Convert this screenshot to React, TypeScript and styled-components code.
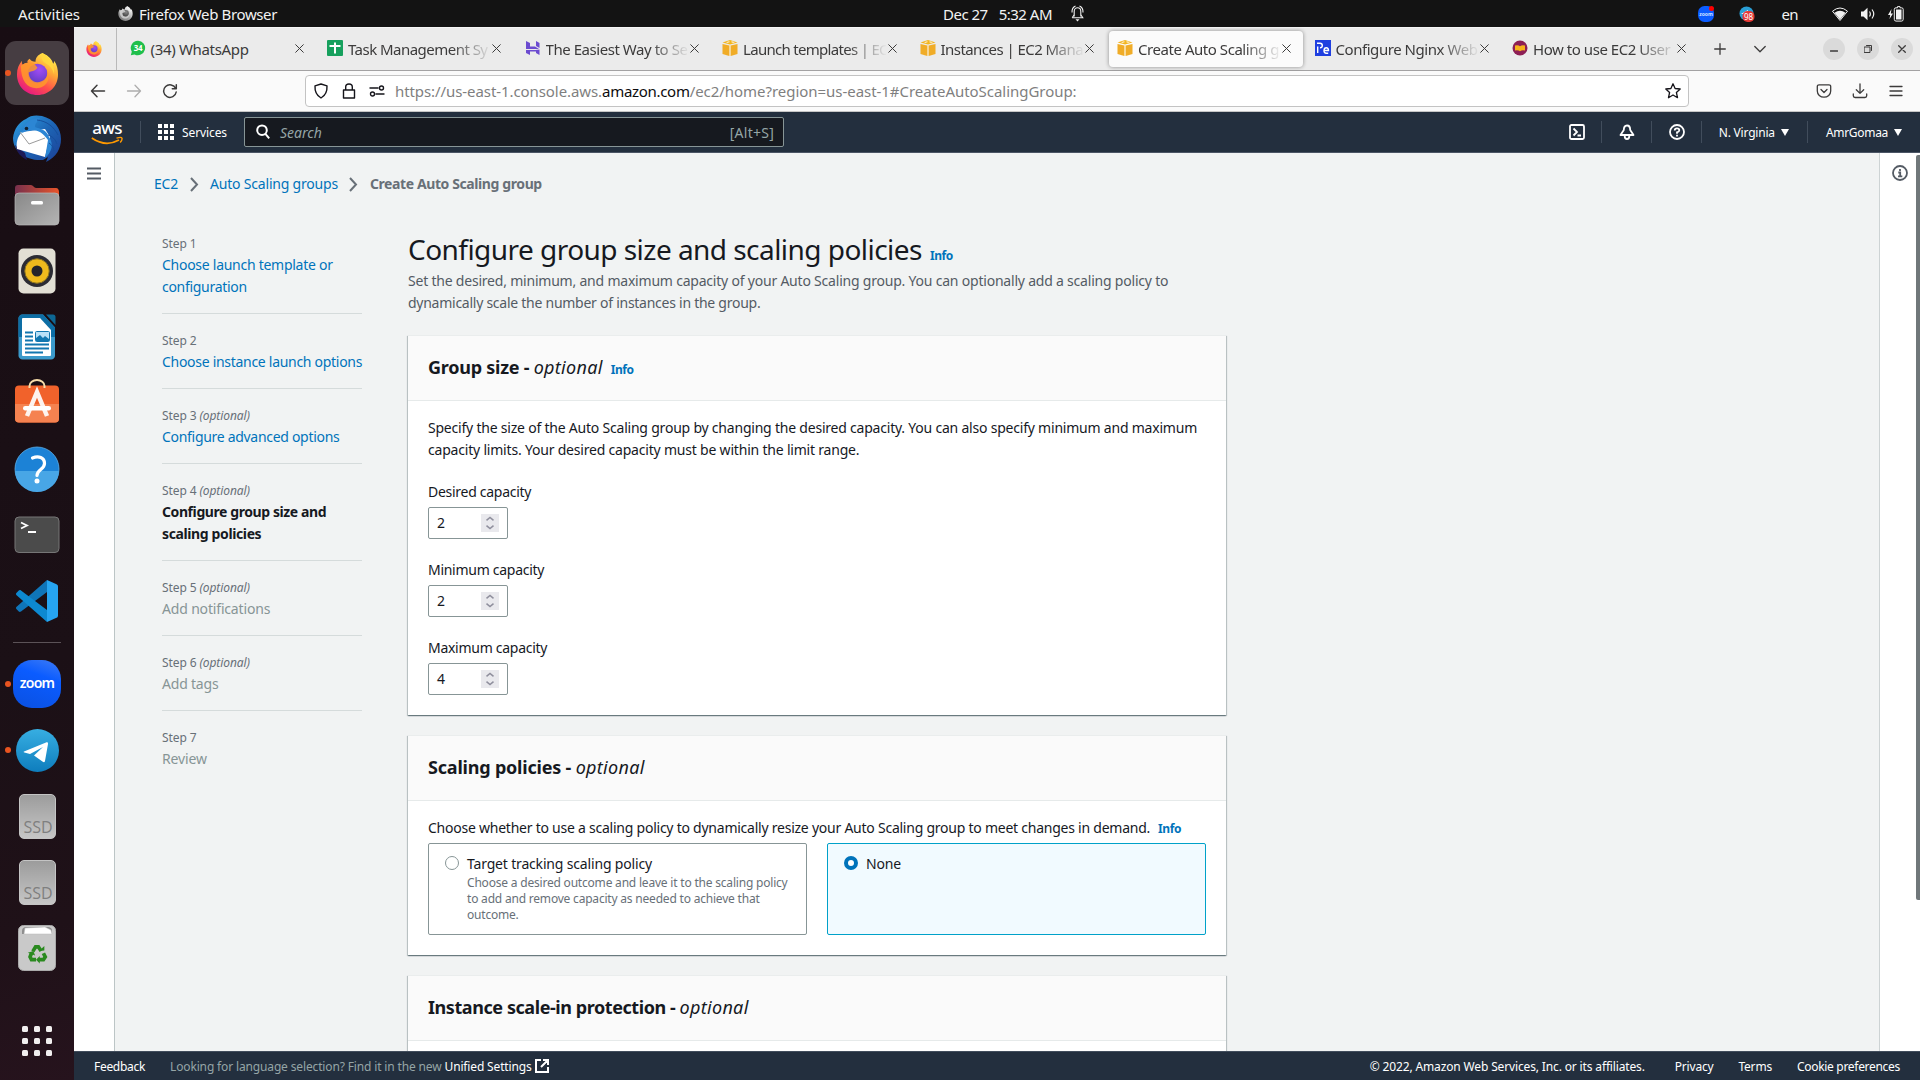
import React from 'react';
import styled, { createGlobalStyle, css } from 'styled-components';

const Global = createGlobalStyle`
  *, *::before, *::after { box-sizing: border-box; }
  html, body { margin: 0; padding: 0; background: #131313; overflow: hidden; }
  body { font-family: "Noto Sans", "Open Sans", sans-serif; font-size: 14px; line-height: 22px; color: #16191f; }
  svg { display: block; flex: none; }
`;

const Txt = styled.span<{ $ls?: number }>`
  white-space: nowrap;
  letter-spacing: ${p => p.$ls ?? 0}px;
`;

/* ---------- desktop shell ---------- */
const Screen = styled.div`
  width: 1920px;
  height: 1080px;
  display: flex;
  flex-direction: column;
  overflow: hidden;
`;
const TopBar = styled.header`
  height: 27px;
  flex: none;
  display: grid;
  grid-template-columns: 942px auto 1fr;
  align-items: center;
  background: #131313;
  color: #f2f2f2;
  font-size: 15px;
  line-height: 26px;
`;
const BarLeft = styled.div`
  display: flex;
  align-items: center;
  padding-left: 18px;
`;
const AppMenu = styled.div`
  display: flex;
  align-items: center;
  gap: 6px;
  margin-left: 38px;
`;
const Clock = styled.div`
  display: flex;
  align-items: center;
  width: 141px;
  padding-left: 1px;
`;
const Time = styled(Txt)` margin: 0 19px 0 11px; `;
const BarRight = styled.div`
  display: flex;
  align-items: center;
  justify-content: flex-end;
  padding-right: 16px;
`;
const Lang = styled(Txt)` margin: 0 34px 0 26px; `;
const Status = styled.div` display: flex; gap: 12px; align-items: center; `;
const TrayGap = styled.div` width: 25px; `;

const Desktop = styled.div` flex: 1; display: flex; min-height: 0; `;
const Dock = styled.nav`
  width: 74px;
  flex: none;
  padding-top: 13px;
  display: flex;
  flex-direction: column;
  background: linear-gradient(165deg, #180d13 0%, #1b1016 60%, #1f1118 85%, #26131d 100%);
`;
const Slot = styled.div<{ $running?: boolean; $active?: boolean }>`
  height: 66px;
  flex: none;
  display: flex;
  align-items: center;
  &::before {
    content: "";
    width: 6px;
    height: 6px;
    margin-left: 5px;
    border-radius: 50%;
    background: ${p => (p.$running ? '#e95420' : 'transparent')};
    z-index: 1;
  }
  & > div {
    width: 64px;
    height: 64px;
    margin-left: -6px;
    border-radius: 11px;
    display: flex;
    align-items: center;
    justify-content: center;
    background: ${p => (p.$active ? '#463d42' : 'transparent')};
  }
`;
const DockRule = styled.div` width: 48px; height: 1px; margin: 8px 13px; background: #5b5257; flex: none; `;
const AppsSlot = styled.div` margin-top: auto; padding: 0 22px 24px; `;

const Browser = styled.main` flex: 1; display: flex; flex-direction: column; min-width: 0; `;

/* ---------- browser chrome ---------- */
const TabStrip = styled.div`
  height: 44px;
  flex: none;
  display: flex;
  background: #ebebeb;
  border-top: 1px solid #f5f5f5;
  border-bottom: 1px solid #a3a2a3;
  color: #3c3b3b;
  font-size: 15px;
`;
const Pinned = styled.div`
  width: 43px;
  display: flex;
  align-items: center;
  padding-left: 12px;
  border-right: 1px solid #b9b9b9;
  margin-right: 2.75px;
`;
const Tab = styled.div<{ $active?: boolean }>`
  width: 194px;
  margin: 3px 1.75px;
  padding: 0 12px 2px 8px;
  display: flex;
  align-items: center;
  border-radius: 4px;
  ${p => p.$active && css`background: #fbfbfb; box-shadow: 0 0 4px rgba(0, 0, 0, .4);`}
`;
const TabTitle = styled.div<{ $ls: number; $plain?: boolean }>`
  width: 143px;
  margin: 1px 2px 0 5px;
  white-space: nowrap;
  letter-spacing: ${p => p.$ls}px;
  ${p => !p.$plain && css`mask-image: linear-gradient(to right, #000 104px, transparent 144px);`}
`;
const TabTools = styled.div` display: flex; align-items: center; gap: 28px; padding-left: 14px; `;
const WindowButtons = styled.div` margin-left: auto; padding-right: 7px; display: flex; align-items: center; gap: 12px; `;
const WinButton = styled.div`
  width: 22px;
  height: 22px;
  border-radius: 50%;
  background: #dadada;
  display: flex;
  align-items: center;
  justify-content: center;
`;

const NavBar = styled.div`
  height: 41px;
  flex: none;
  display: flex;
  align-items: center;
  background: #fafafa;
  border-bottom: 1px solid #c6c6c6;
  color: #3c3b3b;
`;
const NavButtons = styled.div` width: 231px; display: flex; gap: 20px; padding-left: 16px; `;
const UrlField = styled.div`
  width: 1384px;
  height: 32px;
  display: flex;
  align-items: center;
  padding: 0 7px;
  background: #fff;
  border: 1px solid #c3c3c3;
  border-radius: 4px;
  font-size: 15px;
`;
const UrlIcons = styled.div` display: flex; align-items: center; gap: 12px; width: 82px; `;
const Url = styled.div` flex: 1; color: #7f7f7f; white-space: nowrap; `;
const Host = styled(Txt)` color: #0c0c0d; `;
const NavTools = styled.div` display: flex; gap: 20px; margin-left: auto; padding-right: 16px; `;

/* ---------- console header and footer ---------- */
const Console = styled.header`
  height: 41px;
  flex: none;
  display: flex;
  align-items: center;
  padding: 0 18px 0 17px;
  background: #232f3e;
  border-bottom: 1px solid #4b5565;
  color: #fff;
  font-size: 12px;
  & span, & em { padding-top: 2px; }
`;
const Divider = styled.i<{ $l: number; $r: number }>`
  width: 1px;
  height: 22px;
  background: #414d5c;
  margin: 0 ${p => p.$r}px 0 ${p => p.$l}px;
`;
const Services = styled.div` display: flex; align-items: center; gap: 8px; width: 86px; `;
const SearchField = styled.div`
  width: 540px;
  height: 30px;
  display: flex;
  align-items: center;
  padding: 0 9px 0 11px;
  background: #16191f;
  border: 1px solid #879596;
  border-radius: 2px;
  color: #95a5a6;
  font-size: 14px;
  & > em { margin-left: 10px; flex: 1; }
`;
const Utilities = styled.div` margin-left: auto; display: flex; align-items: center; `;
const Caret = styled.i`
  margin-left: 6px;
  border: 4.5px solid transparent;
  border-top: 7px solid #fff;
  border-bottom: 0;
`;
const Footer = styled.footer`
  height: 29px;
  flex: none;
  display: flex;
  align-items: center;
  padding: 0 20px;
  background: #232f3e;
  border-top: 1px solid #414d5c;
  color: #fff;
  font-size: 12px;
  & span { padding-top: 2px; }
`;
const FooterNote = styled.div`
  margin-left: 25px;
  color: #95a5a6;
  display: flex;
  align-items: center;
  gap: 2px;
  & b { color: #fff; font-weight: 400; }
`;
const FooterLinks = styled.div` margin-left: auto; display: flex; `;
const FooterLink = styled(Txt)<{ $gap: number }>` margin-left: ${p => p.$gap}px; `;

/* ---------- page ---------- */
const Page = styled.div` flex: 1; display: flex; min-height: 0; background: #f1f3f3; overflow: hidden; `;
const LeftRail = styled.aside`
  width: 41px;
  flex: none;
  padding: 14px 0 0 13px;
  background: #fff;
  border-right: 1px solid #bcc5c6;
`;
const RightRail = styled.aside`
  width: 41px;
  flex: none;
  margin-left: auto;
  padding-left: 12px;
  display: flex;
  justify-content: space-between;
  background: #fff;
  border-left: 1px solid #cdd3d4;
  & > svg { margin-top: 12px; }
`;
const Scrollbar = styled.div` width: 4px; height: 745px; margin-top: 2px; border-radius: 2px 0 0 2px; background: #70777a; `;
const Content = styled.div` flex: none; width: 1112px; padding-left: 39px; `;
const Crumbs = styled.div`
  height: 62px;
  display: flex;
  align-items: center;
  color: #0073bb;
  & > svg { margin: 0 11.5px; }
`;
const CrumbHere = styled(Txt)` color: #687078; font-weight: 700; `;
const Columns = styled.div` display: flex; gap: 45px; padding-left: 8px; `;
const Steps = styled.ol` list-style: none; margin: 0; padding: 18px 0 0; width: 200px; flex: none; `;
const Step = styled.li`
  padding: 0 0 15px;
  margin-bottom: 16px;
  border-bottom: 1px solid #d5dbdb;
  &:last-child { border: 0; }
`;
const StepNo = styled.div` height: 21px; font-size: 12px; color: #687078; `;
const StepName = styled.div<{ $kind: 'link' | 'now' | 'off' }>`
  display: flex;
  flex-direction: column;
  color: ${p => ({ link: '#0073bb', now: '#16191f', off: '#879596' })[p.$kind]};
  font-weight: ${p => (p.$kind === 'now' ? 700 : 400)};
`;
const Form = styled.section` width: 820px; flex: none; padding-top: 16px; `;
const Heading = styled.h1` margin: 0 0 3px 1px; height: 36px; font-size: 28px; line-height: 36px; font-weight: 400; display: flex; align-items: baseline; `;
const Info = styled(Txt)` color: #0073bb; font-size: 12px; line-height: 12px; font-weight: 700; margin-left: 8px; `;
const Intro = styled.p` margin: 0 0 21px 1px; color: #545b64; display: flex; flex-direction: column; `;
const Card = styled.div`
  margin: 0 1px 20px;
  background: #fff;
  border-top: 1px solid #eaeded;
  box-shadow: 0 1px 1px 0 rgba(0, 28, 36, .35), 1px 1px 1px 0 rgba(0, 28, 36, .18), -1px 1px 1px 0 rgba(0, 28, 36, .18);
`;
const CardHead = styled.h2`
  margin: 0;
  height: 65px;
  padding: 19px 20px 0;
  background: #fafafa;
  border-bottom: 1px solid #e6eaea;
  font-size: 18px;
  line-height: 24px;
`;
const Opt = styled.em<{ $ls?: number }>` font-weight: 400; letter-spacing: ${p => p.$ls ?? 0}px; `;
const CardBody = styled.div<{ $h: number }>` height: ${p => p.$h}px; padding: 16px 20px 0; `;
const Copy = styled.div` display: flex; flex-direction: column; margin-bottom: 20px; `;
const Field = styled.label` display: block; height: 78px; `;
const NumberBox = styled.div`
  width: 80px;
  height: 32px;
  margin-top: 4px;
  padding: 0 8px;
  display: flex;
  align-items: center;
  justify-content: space-between;
  border: 1px solid #879596;
  border-radius: 2px;
  color: #16191f;
`;
const Tiles = styled.div` display: flex; gap: 20px; margin-top: 4px; `;
const Tile = styled.div<{ $on?: boolean }>`
  width: 379px;
  height: 92px;
  padding: 9px 16px;
  display: flex;
  gap: 8px;
  border: 1px solid ${p => (p.$on ? '#00a1c9' : '#879596')};
  border-radius: 2px;
  background: ${p => (p.$on ? '#f1faff' : '#fff')};
`;
const Radio = styled.i<{ $on?: boolean }>`
  width: 14px;
  height: 14px;
  margin-top: 3px;
  flex: none;
  border-radius: 50%;
  background: #fff;
  border: ${p => (p.$on ? '4.5px solid #0073bb' : '1px solid #879596')};
`;
const Hint = styled.div` display: flex; flex-direction: column; font-size: 12px; line-height: 16px; color: #687078; `;

/* ---------- icons ---------- */
const Firefox = ({ size, mono }: { size: number; mono?: boolean }) => {
  const id = mono ? 'm' : `c${size}`;
  return (
    <svg width={size} height={size} viewBox="0 0 44 44">
      <defs>
        <linearGradient id={`fx${id}`} x1="0.85" y1="0.05" x2="0.25" y2="1">
          <stop offset="0" stopColor={mono ? '#f4f4f4' : '#fff44f'} />
          <stop offset=".35" stopColor={mono ? '#cfcfcf' : '#ffa436'} />
          <stop offset=".65" stopColor={mono ? '#a0a0a0' : '#ff4f4b'} />
          <stop offset="1" stopColor={mono ? '#777' : '#e31587'} />
        </linearGradient>
        <radialGradient id={`fp${id}`} cx=".6" cy=".3" r=".8">
          <stop offset="0" stopColor={mono ? '#888' : '#a24cf5'} />
          <stop offset="1" stopColor={mono ? '#333' : '#5a3bc0'} />
        </radialGradient>
      </defs>
      <path fill={`url(#fx${id})`} d="M27 1c7 3 10 7 11 11 1-1 1-2 1-3 3 4 4 9 4 14 0 12-9 21-21 21S1 35 1 23C1 17 3 13 6 9c0 2 0 3 1 4 1-1 3-2 5-2-1-1 0-3 2-4 1 2 3 3 6 3 0-4 2-7 7-9z" />
      <circle cx="22" cy="22" r="10" fill={`url(#fp${id})`} />
      <path fill={mono ? '#d0d0d0' : '#ff9a2a'} d="M5 14c4-3 7-3 9-3 4 0 6 2 8 5-3 4-6 3-9 5 0 7 6 12 13 9 5-2 7-6 6-11 4 9-1 18-11 18S5 29 5 14z" opacity=".85" />
      <path fill={mono ? '#eee' : '#ffd83d'} d="M27 1c8 4 13 13 12 22-1-5-4-9-8-11-5-3-6-7-4-11z" opacity=".9" />
    </svg>
  );
};
const Thunderbird = () => (
  <svg width="48" height="48" viewBox="0 0 48 48">
    <defs>
      <linearGradient id="tb" x1="0" y1="0" x2="1" y2="1"><stop offset="0" stopColor="#2fa3e6" /><stop offset=".5" stopColor="#1d65b5" /><stop offset="1" stopColor="#1c3f96" /></linearGradient>
    </defs>
    <path fill="url(#tb)" d="M13 4C17 0 24 0 29 1c12 3 19 12 19 23 0 10-5 18-15 23l2-5-5 3C12 46 0 36 0 23 1 14 6 7 13 4z" />
    <path fill="#1c1a58" d="M2 30c2 8 6 12 12 15L12 38z" />
    <path fill="#fff" d="M9 17l23-3 5 8-5 20L4 34C3 28 4 22 9 17z" />
    <path fill="none" stroke="#9a9a9a" d="M7 17l9 12 16-6" />
    <path fill="#2c86d4" d="M9 18C11 8 17 3 27 3c-2 3-5 5-5 9 5 2 11 2 14 10 5 7 3 15-4 21l3-18C28 15 20 12 9 18z" />
    <circle cx="13.500" cy="13.500" r="1.800" fill="#123" />
    <path fill="none" stroke="#164f9c" d="M24 5c10 1 17 7 21 15M35 20c4 1 8 5 9 9M36 28c3 2 5 5 5 8" />
  </svg>
);
const Files = () => (
  <svg width="46" height="42" viewBox="0 0 46 42">
    <defs>
      <linearGradient id="fa"><stop offset="0" stopColor="#77304d" /><stop offset="1" stopColor="#e8552b" /></linearGradient>
      <linearGradient id="fb" x2="1" y2="1"><stop offset="0" stopColor="#888" /><stop offset="1" stopColor="#b4b4b4" /></linearGradient>
    </defs>
    <path fill="url(#fa)" d="M4 1h13c2 0 3 3 5 3h20c2 0 3 2 3 4v12H1V4c0-2 1-3 3-3z" />
    <rect x="1" y="9" width="44" height="32" rx="4" fill="url(#fb)" stroke="#b9b9b9" strokeWidth=".7" />
    <rect x="17" y="17" width="12" height="3.500" rx="1.500" fill="#fff" />
  </svg>
);
const Rhythmbox = () => (
  <svg width="38" height="46" viewBox="0 0 38 46">
    <rect x=".5" y=".5" width="37" height="45" rx="5" fill="#e2dfd4" />
    <circle cx="19" cy="23" r="16" fill="#2b2b33" />
    <circle cx="19" cy="23" r="12.200" fill="#efba1d" stroke="#8c7420" />
    <circle cx="19" cy="23" r="5.500" fill="#25252b" />
  </svg>
);
const Writer = () => (
  <svg width="38" height="46" viewBox="0 0 38 46">
    <path fill="#3b9acb" d="M5 .5h20l12 13V41a4 4 0 0 1-4 4.500H5A4 4 0 0 1 .5 41V5A4 4 0 0 1 5 .5z" />
    <path fill="#0d6ea5" d="M5 .5h20l12 13V23H.5V5A4 4 0 0 1 5 .5z" />
    <path fill="#0d6794" d="M28 .5h7a2.500 2.500 0 0 1 2.500 2.500v8z" />
    <path fill="#fff" d="M5 4h17l11 12v25a1 1 0 0 1-1 1H5a1 1 0 0 1-1-1V5a1 1 0 0 1 1-1z" />
    <path stroke="#1277b0" strokeWidth="2" d="M7 18.500h8M7 22.500h8M7 26.500h8M7 30.500h24M7 34.500h24M7 38.500h18" />
    <rect x="17.500" y="17.500" width="14" height="10" rx="1" fill="#b9e0f7" stroke="#1277b0" />
    <path fill="#1277b0" d="M18 27v-3l4-3 3 3 2-2 4 3v2z" />
  </svg>
);
const Software = () => (
  <svg width="46" height="50" viewBox="0 0 46 50">
    <rect x="1" y="7.500" width="44" height="37" rx="4" fill="#f1622b" />
    <path fill="#f58250" d="M1 26h44v14.500a4 4 0 0 1-4 4H5a4 4 0 0 1-4-4z" />
    <path fill="none" stroke="#f7dca9" strokeWidth="2" d="M15.500 10V8a7.500 6 0 0 1 15 0v2" />
    <path fill="none" stroke="#fdf3ee" strokeWidth="4.500" d="M13 38l10-24 10 24" />
    <rect x="9" y="28" width="28" height="4.500" rx="2.200" fill="#fff" />
  </svg>
);
const Help = () => (
  <svg width="46" height="46" viewBox="0 0 46 46">
    <circle cx="23" cy="23" r="22" fill="#1c82d6" stroke="#5aaeea" strokeWidth=".8" />
    <path fill="#48a6e6" d="M1 25h44a22 21 0 0 1-44 0z" />
    <path fill="none" stroke="#fff" strokeWidth="3.200" strokeLinecap="round" d="M18.500 12c6-2.500 12-.5 12 5.500 0 6-7.500 6-7.500 12" />
    <circle cx="23" cy="35" r="2.500" fill="#fff" />
  </svg>
);
const Terminal = () => (
  <svg width="46" height="38" viewBox="0 0 46 38">
    <rect x="1" y="1" width="44" height="35.500" rx="4" fill="#4b4b4b" stroke="#767676" />
    <path fill="none" stroke="#fff" strokeWidth="1.800" d="M7 6.500l6 3-6 3M14 16h8" />
  </svg>
);
const VSCode = () => (
  <svg width="42" height="42" viewBox="0 0 42 42">
    <path fill="#0f75b9" d="M31 0v12L5 31.500c-1 .7-1.500.6-2.200 0L.6 29.300c-.8-.8-.8-1.700 0-2.500z" />
    <path fill="#0d89d1" d="M.6 12.800c-.8.8-.8 1.700 0 2.500L31 42V30L5 10.600c-1-.7-1.500-.6-2.200 0z" />
    <path fill="#26a5f1" d="M31 0l9.500 4.200c1 .5 1.500 1.200 1.500 2.300v29c0 1.100-.5 1.800-1.500 2.300L31 42z" />
  </svg>
);
const ZoomTile = styled.div`
  width: 48px;
  height: 48px;
  border-radius: 19px;
  background: linear-gradient(200deg, #3f7cf5 0%, #0b5cff 35%, #0a50e0 100%);
  color: #fff;
  font: 600 14px/45px "Noto Sans", sans-serif;
  letter-spacing: -.7px;
  text-align: center;
`;
const Telegram = () => (
  <svg width="43" height="43" viewBox="0 0 43 43">
    <defs><linearGradient id="tg" x2="0" y2="1"><stop offset="0" stopColor="#37aee2" /><stop offset="1" stopColor="#0e7dbd" /></linearGradient></defs>
    <circle cx="21.500" cy="21.500" r="21.500" fill="url(#tg)" />
    <path fill="#fff" d="M8 22.500L30 13.500c1.500-.5 2.200.2 2 1.500l-3 17c-.3 1.300-1.200 1.500-2.200.8L18 26.500l9-8.500-13 7-5.600-1.500c-1-.3-.9-.7-.4-1z" />
  </svg>
);
const SsdTile = styled.div`
  width: 37px;
  height: 45px;
  border-radius: 5px;
  background: linear-gradient(#9c9c9c, #c6c6c6);
  border: 1px solid #c4c4c4;
  color: #7f7f7f;
  font: 400 16px/20px "Open Sans", sans-serif;
  padding: 22px 0 0 4px;
`;
const Trash = () => (
  <svg width="38" height="46" viewBox="0 0 38 46">
    <rect x=".5" y=".5" width="37" height="45" rx="5" fill="#c9c9c9" stroke="#aaa" />
    <path fill="#8d8d8d" d="M4 9V6c0-3 2-4 4-4h22c2 0 4 1 4 4v3z" />
    <path fill="#fff" stroke="#bbb" strokeWidth=".5" d="M6 9l1-6 20-1 6 3 1 4z" />
    <g transform="translate(1.500 2.500) scale(.92)">
      <g stroke="#2a8a1f" strokeWidth="4" fill="none">
        <path d="M14.500 26l3-5h3l3 4.500" />
        <path d="M26 28l2 4-2 3h-5" />
        <path d="M18 35h-5l-1.500-3 1.500-4" />
      </g>
      <path fill="#2a8a1f" d="M21 25.500l6-.5v-5zM22 31v8l-4-4zM9 27.500l6-2 2 5z" />
    </g>
  </svg>
);
const AppsGrid = () => (
  <svg width="30" height="30" viewBox="0 0 30 30" fill="#f1efef">
    {[0, 12, 24].map(y => [0, 12, 24].map(x => <rect key={`${x}-${y}`} x={x} y={y} width="6" height="6" rx="1.500" />))}
  </svg>
);
const Line = ({ d, w = 16, h = 16, sw = 1.3, op = 1, c = 'currentColor' }: { d: string; w?: number; h?: number; sw?: number; op?: number; c?: string }) => (
  <svg width={w} height={h} viewBox={`0 0 ${w} ${h}`} fill="none" stroke={c} strokeWidth={sw} strokeLinecap="round" strokeLinejoin="round" opacity={op}><path d={d} /></svg>
);
const Cross = () => <Line w={9} h={9} sw={1} d="M.7.7l7.600 7.600M8.300.7L.7 8.300" />;
const Cube = () => (
  <svg width="16" height="16" viewBox="0 0 16 16">
    <path fill="#f0ac27" d="M.5 4l6.800 1.600V16L.5 14zM15.500 4L8.700 5.600V16l6.800-2z" />
    <path fill="#f3b51f" d="M8 0l7.500 2.400L8 4.400.5 2.400z" />
    <path fill="#fff" d="M4 2.300l3-1 1 .6-2.500 1zM10 1.300l3 1-2 .6-2-.8z" opacity=".75" />
    <path fill="#f8d68d" d="M7.300 5.600h1.400V16H7.300z" />
  </svg>
);
const WhatsApp = () => (
  <svg width="16" height="16" viewBox="0 0 16 16">
    <path fill="#1fbf4b" d="M8 .8A7.200 7.200 0 1 1 4.600 14.400L.8 15.300l1-3.600A7.200 7.200 0 0 1 8 .8z" />
    <text x="8" y="11" textAnchor="middle" fontSize="8" fontWeight="700" fill="#fff" fontFamily="Noto Sans" letterSpacing="-.4">34</text>
  </svg>
);
const Sheets = () => (
  <svg width="16" height="16" viewBox="0 0 16 16"><rect width="16" height="16" rx="1" fill="#16a05d" /><path stroke="#fff" strokeWidth="2" d="M2.500 6h11M8 2.500v11" /></svg>
);
const Hostinger = () => (
  <svg width="16" height="16" viewBox="0 0 16 16" fill="#6b4bd0">
    <path d="M1 1l4 2v3.500h5L14 9H1zM11 1l3.500 2v5L11 6zM1 10h9.500L14.500 9.500V15L11 13v-1.500H5V15l-4-2z" />
  </svg>
);
const Pe = () => (
  <svg width="16" height="16" viewBox="0 0 16 16"><rect width="16" height="16" fill="#1f3fe0" />
    <path stroke="#fff" strokeWidth="1.400" fill="none" d="M2.700 6.500v6.500M2 3.200h3q2.300 0 2.300 2.200T5 7.800M9 10.500h4.500q0-2.800-2.200-2.800T9 10.500t2.400 2.700h1.800" /></svg>
);
const Book = () => (
  <svg width="16" height="16" viewBox="0 0 16 16"><circle cx="8" cy="8" r="7.500" fill="#8d1f54" /><path fill="#f7b21a" d="M3 5.500q3-1 5 .8 2-1.800 5-.8v5q-3-.8-5 .8-2-1.600-5-.8z" /></svg>
);
const ZoomTray = () => (
  <svg width="16" height="16" viewBox="0 0 16 16"><rect width="16" height="16" rx="6.500" fill="#0b5cff" />
    <text x="8" y="9.500" textAnchor="middle" fontSize="5" fontWeight="700" fill="#cfe0ff" fontFamily="Noto Sans">zoom</text>
    <circle cx="13.500" cy="2.500" r="2.500" fill="#f00" /></svg>
);
const TelegramTray = () => (
  <svg width="16" height="16" viewBox="0 0 16 16"><circle cx="7.500" cy="7.500" r="7" fill="#2a9fd6" /><path fill="#fff" d="M2 8l7-4v4z" />
    <rect x="3.500" y="5" width="12" height="11" rx="5" fill="#e53935" />
    <text x="9.500" y="13.500" textAnchor="middle" fontSize="8" fill="#fff" fontFamily="Noto Sans">98</text></svg>
);
const Wifi = () => <svg width="16" height="14" viewBox="0 0 16 14"><path d="M.5 4.200Q8-2.200 15.500 4.200L8 13.500z" fill="none" stroke="#f2f2f2" strokeLinejoin="round" /><path fill="#f2f2f2" d="M2.500 5.800Q8 1.500 13.500 5.800L8 12.500z" /></svg>;
const Volume = () => <svg width="16" height="14" viewBox="0 0 16 14"><path fill="#f2f2f2" d="M1 4.500h2.500L7.500.8v12.400L3.500 9.500H1z" /><path fill="none" stroke="#f2f2f2" strokeWidth="1.200" d="M9.500 4.500q1.700 2.500 0 5M12 2.500q3.500 4.500 0 9" /></svg>;
const Battery = () => <svg width="16" height="16" viewBox="0 0 16 16"><path fill="#f2f2f2" d="M3.500 3L0 9h2.200L1.500 13 5 7.500H2.800zM8 3.500h5.500v10H8z" /><path fill="none" stroke="#f2f2f2" d="M9.500 1.800V.6H12v1.200h1.500q1.700 0 1.700 1.500v10q0 1.800-1.700 1.800H8q-1.700 0-1.700-1.800v-10q0-1.500 1.700-1.500z" /></svg>;
const TopBell = () => (
  <svg width="13" height="17" viewBox="0 0 13 17" fill="none" stroke="#f2f2f2" strokeWidth="1.100">
    <path d="M3.200 11.500V6.500a3.300 3.700 0 0 1 6.600 0v5M1.200 12.800h10.600L10 10M3 10l-1.800 2.800M1 7.500Q.8 2.500 4.500 1M12 7.500Q12.200 2.500 8.500 1" /><path fill="#f2f2f2" stroke="none" d="M4.500 14.300h4L6.500 16.500z" />
  </svg>
);
const AwsLogo = styled.div`
  width: 32px;
  height: 24px;
  display: flex;
  flex-direction: column;
  align-items: center;
  font: 500 17px/15px "Noto Sans", sans-serif;
  letter-spacing: -.7px;
  & > svg { margin-top: 1px; }
`;
const Smile = () => (
  <svg width="32" height="9" viewBox="0 0 32 9" fill="none" stroke="#ff9900" strokeWidth="1.700">
    <path d="M.8 2Q14.500 11.500 28 4" /><path strokeWidth="1.400" d="M25.500 2.200q5-1.500 5.500 0t-1.800 4.300" />
  </svg>
);
const Grid9 = () => (
  <svg width="16" height="16" viewBox="0 0 16 16" fill="#fff">{[0, 6, 12].map(y => [0, 6, 12].map(x => <rect key={`${x}${y}`} x={x} y={y} width="4" height="4" />))}</svg>
);
const Chevron = () => <svg width="9" height="15" viewBox="0 0 9 15" fill="none" stroke="#687078" strokeWidth="2"><path d="M1 1l6 6.500L1 14" /></svg>;
const Spinner = () => (
  <svg width="18" height="18" viewBox="0 0 18 18"><rect width="18" height="18" fill="#e9e9ed" /><path fill="none" stroke="#8f8f9d" strokeWidth="1.500" d="M5.500 6.400l3.500-3 3.500 3M5.500 11.600l3.500 3 3.500-3" /></svg>
);

/* ---------- data ---------- */
const tabs = [
  { icon: <WhatsApp />, title: '(34) WhatsApp', ls: -0.33, plain: true },
  { icon: <Sheets />, title: 'Task Management Sy', ls: -0.53 },
  { icon: <Hostinger />, title: 'The Easiest Way to Se', ls: -0.45 },
  { icon: <Cube />, title: 'Launch templates | EC', ls: -0.7 },
  { icon: <Cube />, title: 'Instances | EC2 Mana', ls: -0.55 },
  { icon: <Cube />, title: 'Create Auto Scaling g', ls: -0.45, active: true },
  { icon: <Pe />, title: 'Configure Nginx Web', ls: -0.45 },
  { icon: <Book />, title: 'How to use EC2 User', ls: -0.45 },
];
type StepItem = { lines: [string, number][]; kind: 'link' | 'now' | 'off'; optional?: boolean };
const steps: StepItem[] = [
  { lines: [['Choose launch template or', -0.27], ['configuration', -0.3]], kind: 'link' },
  { lines: [['Choose instance launch options', -0.29]], kind: 'link' },
  { lines: [['Configure advanced options', -0.3]], kind: 'link', optional: true },
  { lines: [['Configure group size and', -0.41], ['scaling policies', -0.38]], kind: 'now', optional: true },
  { lines: [['Add notifications', -0.17]], kind: 'off', optional: true },
  { lines: [['Add tags', -0.2]], kind: 'off', optional: true },
  { lines: [['Review', -0.15]], kind: 'off' },
];
const fields = [['Desired capacity', '2'], ['Minimum capacity', '2'], ['Maximum capacity', '4']];

export default function App() {
  return (
    <Screen>
      <Global />
      <TopBar>
        <BarLeft>
          <Txt $ls={-0.05}>Activities</Txt>
          <AppMenu><Firefox size={15} mono /><Txt $ls={-0.37}>Firefox Web Browser</Txt></AppMenu>
        </BarLeft>
        <Clock><Txt $ls={-0.5}>Dec 27</Txt><Time $ls={-0.5}>5:32 AM</Time><TopBell /></Clock>
        <BarRight>
          <ZoomTray /><TrayGap /><TelegramTray />
          <Lang $ls={-0.6}>en</Lang>
          <Status><Wifi /><Volume /><Battery /></Status>
        </BarRight>
      </TopBar>
      <Desktop>
        <Dock>
          <Slot $running $active><div><Firefox size={43} /></div></Slot>
          <Slot><div><Thunderbird /></div></Slot>
          <Slot><div><Files /></div></Slot>
          <Slot><div><Rhythmbox /></div></Slot>
          <Slot><div><Writer /></div></Slot>
          <Slot><div><Software /></div></Slot>
          <Slot><div><Help /></div></Slot>
          <Slot><div><Terminal /></div></Slot>
          <Slot><div><VSCode /></div></Slot>
          <DockRule />
          <Slot $running><div><ZoomTile>zoom</ZoomTile></div></Slot>
          <Slot $running><div><Telegram /></div></Slot>
          <Slot><div><SsdTile>SSD</SsdTile></div></Slot>
          <Slot><div><SsdTile>SSD</SsdTile></div></Slot>
          <Slot><div><Trash /></div></Slot>
          <AppsSlot><AppsGrid /></AppsSlot>
        </Dock>
        <Browser>
          <TabStrip>
            <Pinned><Firefox size={16} /></Pinned>
            {tabs.map(t => (
              <Tab key={t.title} $active={t.active}>
                {t.icon}<TabTitle $ls={t.ls} $plain={t.plain}>{t.title}</TabTitle><Cross />
              </Tab>
            ))}
            <TabTools><Line w={12} h={12} d="M6 .7v10.600M.7 6h10.600" /><Line w={12} h={12} d="M.8 3.500L6 8.700l5.200-5.200" /></TabTools>
            <WindowButtons>
              <WinButton><Line w={8} h={8} d="M.5 6h7" /></WinButton>
              <WinButton><Line w={8} h={8} sw={1} d="M.5 2h5.500v5.500H.5zM2.500.5h5v5" /></WinButton>
              <WinButton><Line w={8} h={8} d="M.7.7l6.600 6.600M7.300.7L.7 7.300" /></WinButton>
            </WindowButtons>
          </TabStrip>
          <NavBar>
            <NavButtons>
              <Line sw={1.5} d="M1.500 8h13M7 2.300L1.500 8 7 13.700" />
              <Line op={0.4} d="M1.500 8h13M9 2.300L14.500 8 9 13.700" />
              <Line sw={1.5} d="M13.700 5.500A6.300 6.300 0 1 0 14.200 9M14.300 1.800v4h-4" />
            </NavButtons>
            <UrlField>
              <UrlIcons>
                <Line c="#15141a" sw={1.4} d="M8 1l6 1.800c.3 5.500-1.500 9.700-6 12.200C3.500 12.500 1.700 8.300 2 2.800z" />
                <Line c="#15141a" sw={1.4} d="M2.500 7h11v8h-11zM4.700 7V4a3.300 3 0 0 1 6.600 0v3" />
                <Line c="#15141a" sw={1.4} d="M1 5h8M12.500 3a2 2 0 1 1 0 4 2 2 0 0 1 0-4M15 11H7M3.500 9a2 2 0 1 1 0 4 2 2 0 0 1 0-4" />
              </UrlIcons>
              <Url><Txt $ls={-0.08}>https://us-east-1.console.aws.</Txt><Host $ls={-0.3}>amazon.com</Host><Txt $ls={-0.04}>/ec2/home?region=us-east-1#CreateAutoScalingGroup:</Txt></Url>
              <Line c="#15141a" d="M8 .8l2.100 4.700 5.100.5-3.800 3.500 1.100 5.200L8 12l-4.500 2.700 1.100-5.200L.8 6l5.100-.5z" />
            </UrlField>
            <NavTools>
              <Line d="M3 1.800h10a1.700 1.700 0 0 1 1.700 1.700V8c0 3.500-3 6.200-6.700 6.200S1.300 11.500 1.300 8V3.500A1.700 1.700 0 0 1 3 1.800zM5 6.500l3 3 3-3" />
              <Line d="M8 .8v9.500M4.300 6.800L8 10.400l3.700-3.600M1.300 11v1.700q0 1.800 1.800 1.800h9.800q1.800 0 1.800-1.800V11" />
              <Line d="M2 3.500h12M2 8h12M2 12.500h12" />
            </NavTools>
          </NavBar>
          <Console>
            <AwsLogo>aws<Smile /></AwsLogo>
            <Divider $l={17} $r={17} />
            <Services><Grid9 /><Txt $ls={-0.1}>Services</Txt></Services>
            <SearchField>
              <svg width="14" height="16" viewBox="0 0 14 16" fill="none" stroke="#fff" strokeWidth="2"><circle cx="6" cy="6.200" r="4.800" /><path d="M9.200 9.700l4 4.600" /></svg>
              <em>Search</em><Txt $ls={0.25}>[Alt+S]</Txt>
            </SearchField>
            <Utilities>
              <svg width="16" height="16" viewBox="0 0 16 16" fill="none" stroke="#fff" strokeWidth="1.800"><rect x="1" y="1" width="14" height="14" rx="1.500" /><path d="M4.500 4.500L8 8l-3.500 3.500M8.500 11.500H12" /></svg>
              <Divider $l={16} $r={17} />
              <svg width="16" height="16" viewBox="0 0 16 16" fill="none" stroke="#fff" strokeWidth="1.800" strokeLinejoin="round"><path d="M8 1.500q3.200 0 3.200 4.500l3.300 5h-13L4.800 6Q4.800 1.500 8 1.500zM5.700 12q0 3 2.300 3t2.300-3" /></svg>
              <Divider $l={16} $r={17} />
              <svg width="16" height="16" viewBox="0 0 16 16" fill="none" stroke="#fff" strokeWidth="1.800"><circle cx="8" cy="8" r="7" /><path d="M5.700 6.400Q5.700 4.300 8 4.300t2.300 1.900Q10.300 7.700 8 8.300V9.700M8 10.700v1.800" /></svg>
              <Divider $l={16} $r={17} />
              <Txt $ls={-0.2}>N. Virginia</Txt><Caret />
              <Divider $l={18} $r={18} />
              <Txt $ls={-0.3}>AmrGomaa</Txt><Caret />
            </Utilities>
          </Console>
          <Page>
            <LeftRail>
              <svg width="14" height="13" viewBox="0 0 14 13" fill="#545b64"><path d="M0 .5h14v2H0zM0 5.500h14v2H0zM0 10.500h14v2H0z" /></svg>
            </LeftRail>
            <Content>
              <Crumbs>
                <Txt $ls={-0.2}>EC2</Txt><Chevron />
                <Txt $ls={-0.2}>Auto Scaling groups</Txt><Chevron />
                <CrumbHere $ls={-0.4}>Create Auto Scaling group</CrumbHere>
              </Crumbs>
              <Columns>
                <Steps>
                  {steps.map((s, i) => (
                    <Step key={i}>
                      <StepNo><Txt $ls={-0.1}>Step {i + 1}{s.optional && <em> (optional)</em>}</Txt></StepNo>
                      <StepName $kind={s.kind}>{s.lines.map(([t, ls]) => <Txt key={t} $ls={ls}>{t}</Txt>)}</StepName>
                    </Step>
                  ))}
                </Steps>
                <Form>
                  <Heading><Txt $ls={-0.54}>Configure group size and scaling policies</Txt><Info $ls={-0.4}>Info</Info></Heading>
                  <Intro>
                    <Txt $ls={-0.21}>Set the desired, minimum, and maximum capacity of your Auto Scaling group. You can optionally add a scaling policy to</Txt>
                    <Txt $ls={-0.26}>dynamically scale the number of instances in the group.</Txt>
                  </Intro>
                  <Card>
                    <CardHead><Txt $ls={-0.25}>Group size - </Txt><Opt $ls={0.3}>optional</Opt><Info $ls={-0.4}>Info</Info></CardHead>
                    <CardBody $h={314}>
                      <Copy>
                        <Txt $ls={-0.214}>Specify the size of the Auto Scaling group by changing the desired capacity. You can also specify minimum and maximum</Txt>
                        <Txt $ls={-0.2}>capacity limits. Your desired capacity must be within the limit range.</Txt>
                      </Copy>
                      {fields.map(([label, value]) => (
                        <Field key={label}><Txt $ls={-0.28}>{label}</Txt><NumberBox>{value}<Spinner /></NumberBox></Field>
                      ))}
                    </CardBody>
                  </Card>
                  <Card>
                    <CardHead><Txt $ls={-0.2}>Scaling policies - </Txt><Opt $ls={0.3}>optional</Opt></CardHead>
                    <CardBody $h={154}>
                      <Txt $ls={-0.24}>Choose whether to use a scaling policy to dynamically resize your Auto Scaling group to meet changes in demand.</Txt><Info $ls={-0.4}>Info</Info>
                      <Tiles>
                        <Tile>
                          <Radio />
                          <div>
                            <Txt $ls={-0.17}>Target tracking scaling policy</Txt>
                            <Hint>
                              <Txt $ls={-0.2}>Choose a desired outcome and leave it to the scaling policy</Txt>
                              <Txt $ls={-0.2}>to add and remove capacity as needed to achieve that</Txt>
                              <Txt $ls={-0.2}>outcome.</Txt>
                            </Hint>
                          </div>
                        </Tile>
                        <Tile $on><Radio $on /><Txt $ls={-0.2}>None</Txt></Tile>
                      </Tiles>
                    </CardBody>
                  </Card>
                  <Card>
                    <CardHead><Txt $ls={-0.43}>Instance scale-in protection - </Txt><Opt $ls={0.3}>optional</Opt></CardHead>
                    <CardBody $h={120} />
                  </Card>
                </Form>
              </Columns>
            </Content>
            <RightRail>
              <svg width="16" height="16" viewBox="0 0 16 16" fill="none" stroke="#545b64" strokeWidth="1.800"><circle cx="8" cy="8" r="7" /><path d="M8 4v2M6.300 7.500H8.200V11M6 11.300h4.300" /></svg>
              <Scrollbar />
            </RightRail>
          </Page>
          <Footer>
            <Txt $ls={-0.3}>Feedback</Txt>
            <FooterNote>
              <Txt $ls={-0.145}>Looking for language selection? Find it in the new <b>Unified Settings</b></Txt>
              <svg width="16" height="16" viewBox="0 0 16 16" fill="none" stroke="#fff" strokeWidth="2"><path d="M7 2H2v12h12V9M9 2h5v5M14 2L7 9" /></svg>
            </FooterNote>
            <FooterLinks>
              <Txt $ls={-0.145}>© 2022, Amazon Web Services, Inc. or its affiliates.</Txt>
              <FooterLink $ls={-0.2} $gap={30}>Privacy</FooterLink>
              <FooterLink $ls={-0.2} $gap={25}>Terms</FooterLink>
              <FooterLink $ls={-0.3} $gap={25}>Cookie preferences</FooterLink>
            </FooterLinks>
          </Footer>
        </Browser>
      </Desktop>
    </Screen>
  );
}
